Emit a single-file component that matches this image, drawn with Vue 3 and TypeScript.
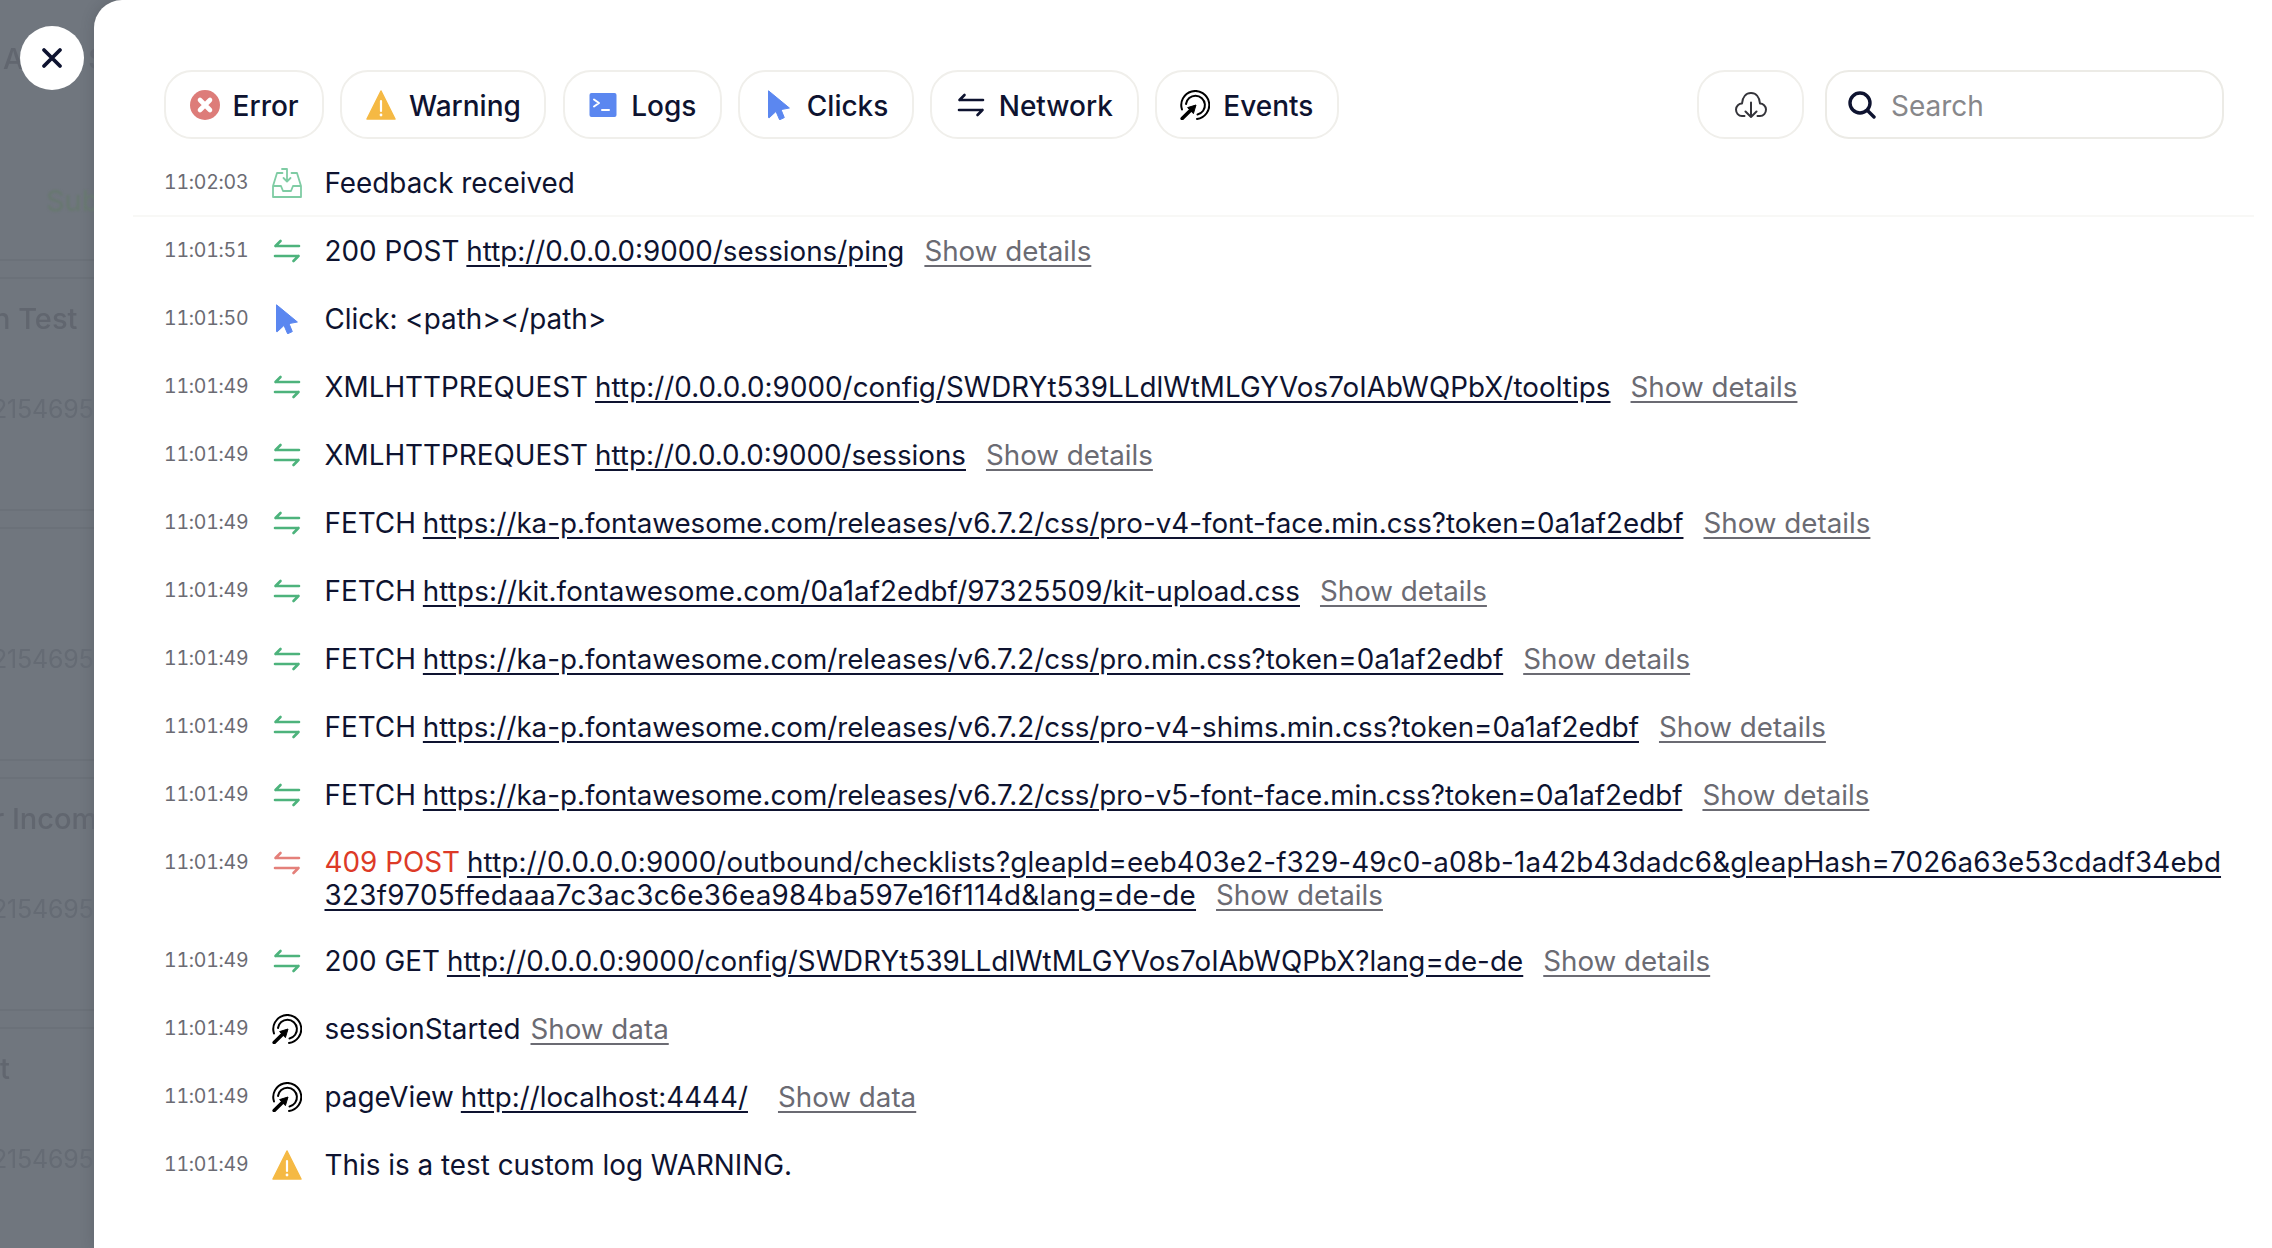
<script setup lang="ts">
type Kind = 'inbox' | 'ok' | 'bad' | 'click' | 'event' | 'warn'
interface Row {
  time: string
  icon: Kind
  lead: string
  leadBad?: boolean
  url?: string
  urlRest?: string
  track?: number
  trackRest?: number
  more?: string
  wide?: boolean
}

const filters: { label: string; icon: Kind | 'error' | 'logs' | 'net' }[] = [
  { label: 'Error', icon: 'error' },
  { label: 'Warning', icon: 'warn' },
  { label: 'Logs', icon: 'logs' },
  { label: 'Clicks', icon: 'click' },
  { label: 'Network', icon: 'net' },
  { label: 'Events', icon: 'event' },
]

const fa = 'https://ka-p.fontawesome.com/releases/v6.7.2/css/'
const rows: Row[] = [
  { time: '11:02:03', icon: 'inbox', lead: 'Feedback received' },
  { time: '11:01:51', icon: 'ok', lead: '200 POST', url: 'http://0.0.0.0:9000/sessions/ping', more: 'Show details' },
  { time: '11:01:50', icon: 'click', lead: 'Click: <path></path>' },
  { time: '11:01:49', icon: 'ok', lead: 'XMLHTTPREQUEST', url: 'http://0.0.0.0:9000/config/SWDRYt539LLdlWtMLGYVos7oIAbWQPbX/tooltips', track: 0.06, more: 'Show details' },
  { time: '11:01:49', icon: 'ok', lead: 'XMLHTTPREQUEST', url: 'http://0.0.0.0:9000/sessions', more: 'Show details' },
  { time: '11:01:49', icon: 'ok', lead: 'FETCH', url: fa + 'pro-v4-font-face.min.css?token=0a1af2edbf', more: 'Show details' },
  { time: '11:01:49', icon: 'ok', lead: 'FETCH', url: 'https://kit.fontawesome.com/0a1af2edbf/97325509/kit-upload.css', track: 0.1, more: 'Show details' },
  { time: '11:01:49', icon: 'ok', lead: 'FETCH', url: fa + 'pro.min.css?token=0a1af2edbf', more: 'Show details' },
  { time: '11:01:49', icon: 'ok', lead: 'FETCH', url: fa + 'pro-v4-shims.min.css?token=0a1af2edbf', more: 'Show details' },
  { time: '11:01:49', icon: 'ok', lead: 'FETCH', url: fa + 'pro-v5-font-face.min.css?token=0a1af2edbf', more: 'Show details' },
  { time: '11:01:49', icon: 'bad', lead: '409 POST', leadBad: true, url: 'http://0.0.0.0:9000/outbound/checklists?gleapId=eeb403e2-f329-49c0-a08b-1a42b43dadc6&gleapHash=7026a63e53cdadf34ebd', track: 0.15, urlRest: '323f9705ffedaaa7c3ac3c6e36ea984ba597e16f114d&lang=de-de', trackRest: 0.33, more: 'Show details' },
  { time: '11:01:49', icon: 'ok', lead: '200 GET', url: 'http://0.0.0.0:9000/config/SWDRYt539LLdlWtMLGYVos7oIAbWQPbX?lang=de-de', track: 0.06, more: 'Show details' },
  { time: '11:01:49', icon: 'event', lead: 'sessionStarted', more: 'Show data' },
  { time: '11:01:49', icon: 'event', lead: 'pageView', url: 'http://localhost:4444/', more: 'Show data', wide: true },
  { time: '11:01:49', icon: 'warn', lead: 'This is a test custom log WARNING.' },
]

const behind = [
  { title: 'n Test', id: '2154695' },
  { title: '', id: '2154695' },
  { title: 'r Incomp', id: '2154695' },
  { title: 't', id: '2154695', tail: true },
]
</script>

<template>
  <div class="page">
    <svg width="0" height="0" class="defs" aria-hidden="true">
      <defs>
        <symbol id="i-error" viewBox="0 0 30 30">
          <circle cx="15" cy="15" r="15" fill="#dd7c79" />
          <path d="M10 10 20 20M20 10 10 20" stroke="#fff" stroke-width="4.6" stroke-linecap="round" />
        </symbol>
        <symbol id="i-warn" viewBox="0 0 30 30">
          <path d="M15 1 29 29H1Z" fill="#f5b944" stroke="#f5b944" stroke-width="1.5" stroke-linejoin="round" />
          <path d="M15 11V21" stroke="#fff" stroke-width="2.2" stroke-linecap="round" />
          <circle cx="15" cy="25" r="1.4" fill="#fff" />
        </symbol>
        <symbol id="i-logs" viewBox="0 0 30 30">
          <rect x="1.5" y="3" width="27" height="24" rx="2" fill="#5b87f0" />
          <path d="M6 9.5 11 13 6 16.5M14 20H21" fill="none" stroke="#fff" stroke-width="2" stroke-linecap="round" stroke-linejoin="round" />
        </symbol>
        <symbol id="i-click" viewBox="0 0 30 30">
          <path d="M4.5 .8 25.4 18 17 19.6 20.3 27.6 15.6 29.8 12 21.4 5.2 27.8 4.5 27.6Z" fill="#5b87f0" stroke="#5b87f0" stroke-width="1" stroke-linejoin="round" />
        </symbol>
        <symbol id="i-arrows" viewBox="0 0 30 30">
          <path d="M3.5 10H27M3.5 10 8.5 5M26.5 20H3M26.5 20 21.5 25" fill="none" stroke="currentColor" stroke-width="2.6" stroke-linecap="round" stroke-linejoin="round" />
        </symbol>
        <symbol id="i-event" viewBox="0 0 30 30">
          <path d="M2 19.5A14 14 0 1 1 17 28.9" fill="none" stroke="#000" stroke-width="2" stroke-linecap="round" />
          <path d="M6 14A9.5 9.5 0 1 1 17.5 24.5" fill="none" stroke="#000" stroke-width="2" stroke-linecap="round" />
          <path d="M16 15 7.6 17.6 13.4 23.6Z" fill="#000" stroke="#000" stroke-width="1" stroke-linejoin="round" />
          <path d="M2.2 28.6 10.6 20.2" stroke="#000" stroke-width="3.6" stroke-linecap="round" />
        </symbol>
        <symbol id="i-inbox" viewBox="0 0 30 30">
          <path d="M10.5 5H5L1 18V29H29V18L25 5H19.5M1 18H9L11 23H19L21 18H29M10 1H15V13M11.5 10 15 13.5 18.5 10" fill="none" stroke="#7fcca4" stroke-width="1.8" stroke-linejoin="round" stroke-linecap="round" />
        </symbol>
      </defs>
    </svg>

    <div class="behind" aria-hidden="true">
      <div class="behind-top">
        <div class="behind-head"><span>A</span><span>S</span></div>
        <div class="behind-sub">Subs</div>
      </div>
      <div v-for="(b, i) in behind" :key="i" class="behind-row">
        <div class="behind-title" :class="{ tail: b.tail }">{{ b.title }}</div>
        <div class="behind-id">{{ b.id }}</div>
      </div>
    </div>

    <button class="close" type="button" aria-label="Close">
      <svg width="24" height="24" viewBox="0 0 24 24">
        <path d="M4 4 20 20M20 4 4 20" stroke="#0e1330" stroke-width="3.8" stroke-linecap="round" />
      </svg>
    </button>

    <main class="panel">
      <header class="toolbar">
        <div class="pills">
          <button v-for="f in filters" :key="f.label" class="pill" type="button">
            <svg class="pill-icon">
              <use :href="f.icon === 'net' ? '#i-arrows' : '#i-' + f.icon" />
            </svg>
            <span>{{ f.label }}</span>
          </button>
        </div>
        <div class="tools">
          <button class="cloud" type="button" aria-label="Download">
            <svg width="32" height="26" viewBox="0 0 32 26">
              <path d="M9.5 24H7C3.5 24 1 21 1 17.5 1 14 4 11.5 7 11.5 7.5 5 11 1 16 1 21 1 24.5 5 25 11.5 28 11.5 31 14 31 17.5 31 21 28.5 24 25 24H22.5M16 10.5V25M10.5 19.5 16 25 21.5 19.5" fill="none" stroke="#34343a" stroke-width="2" stroke-linecap="round" stroke-linejoin="round" />
            </svg>
          </button>
          <div class="search">
            <svg width="28" height="28" viewBox="0 0 28 28">
              <circle cx="12" cy="12" r="10" fill="none" stroke="#0e1330" stroke-width="3.4" />
              <path d="M19.5 19.5 26 26" stroke="#0e1330" stroke-width="3.4" stroke-linecap="round" />
            </svg>
            <span class="placeholder">Search</span>
          </div>
        </div>
      </header>

      <section class="log">
        <div v-for="(r, i) in rows" :key="i" class="row" :class="{ first: i === 0, double: r.urlRest }">
          <time class="time">{{ r.time }}</time>
          <div class="icon" :class="r.icon">
            <svg width="30" height="30">
              <use :href="r.icon === 'ok' || r.icon === 'bad' ? '#i-arrows' : '#i-' + r.icon" />
            </svg>
          </div>
          <div class="content">
            <p class="line">
              <span class="lead" :class="{ bad: r.leadBad }">{{ r.lead }}</span>
              <a v-if="r.url" class="url" href="#" :style="{ letterSpacing: (r.track ?? 0) + 'px' }">{{ r.url }}</a>
              <template v-if="r.urlRest">
                <br />
                <a class="url rest" href="#" :style="{ letterSpacing: (r.trackRest ?? 0) + 'px' }">{{ r.urlRest }}</a>
              </template>
              <a v-if="r.more" class="more" :class="{ near: !r.url, wide: r.wide }" href="#">{{ r.more }}</a>
            </p>
          </div>
        </div>
      </section>
    </main>
  </div>
</template>

<style>
html,
body {
  margin: 0;
  background: #70767e;
}
</style>

<style scoped>
.page {
  display: flex;
  width: 2272px;
  height: 1248px;
  overflow: hidden;
  background: #70767e;
  font-family: Inter, "Liberation Sans", sans-serif;
  color: #0e1330;
  position: relative;
}
.defs {
  position: absolute;
}
button {
  font: inherit;
  color: inherit;
  background: #fff;
  padding: 0;
  margin: 0;
  cursor: pointer;
}

.behind {
  flex: 0 0 94px;
  width: 94px;
  overflow: hidden;
  color: #61666f;
  font-size: 29px;
  font-weight: 500;
  white-space: nowrap;
}
.behind-top {
  height: 259px;
  box-sizing: border-box;
  padding-top: 42px;
}
.behind-head {
  display: flex;
  justify-content: space-between;
  width: 104px;
  padding-left: 3px;
  line-height: 34px;
  filter: blur(0.6px);
}
.behind-sub {
  margin: 108px 0 0 46px;
  line-height: 34px;
  color: #67786f;
  font-weight: 400;
  filter: blur(0.8px);
}
.behind-row {
  height: 250px;
  box-sizing: border-box;
  border-top: 2px solid #6b7179;
  padding-top: 16px;
}
.behind-row::before {
  content: "";
  display: block;
  height: 2px;
  background: #6b7179;
}
.behind-title {
  height: 34px;
  margin-top: 23px;
  margin-left: -7px;
  line-height: 34px;
  filter: blur(0.6px);
}
.behind-title.tail {
  margin-left: 0;
}
.behind-id {
  margin-top: 56px;
  margin-left: -8px;
  line-height: 34px;
  font-size: 25px;
  font-weight: 400;
  letter-spacing: -0.2px;
  color: #656b74;
  filter: blur(0.6px);
}

.close {
  position: absolute;
  left: 20px;
  top: 26px;
  width: 64px;
  height: 64px;
  border: 0;
  border-radius: 50%;
  display: flex;
  align-items: center;
  justify-content: center;
  z-index: 2;
}

.panel {
  flex: 1;
  min-width: 0;
  background: #fff;
  border-radius: 28px 0 0 0;
  box-shadow: 0 0 14px rgba(40, 44, 52, 0.22);
}
.toolbar {
  display: flex;
  justify-content: space-between;
  padding: 70px 48px 10px 70px;
}
.pills {
  display: flex;
  gap: 16.2px;
}
.pill {
  height: 69px;
  box-sizing: border-box;
  display: flex;
  align-items: center;
  gap: 13px;
  padding: 0 23.6px;
  border: 2px solid #f0efeb;
  border-radius: 28px;
  font-size: 28px;
  font-weight: 500;
  color: #0e1330;
}
.pill span {
  padding-top: 2px;
}
.pill-icon {
  width: 30px;
  height: 30px;
}
.tools {
  display: flex;
  gap: 21px;
}
.cloud {
  width: 107px;
  height: 69px;
  box-sizing: border-box;
  border: 2px solid #f0efeb;
  border-radius: 28px;
  display: flex;
  align-items: center;
  justify-content: center;
}
.search {
  width: 399px;
  height: 69px;
  box-sizing: border-box;
  border: 2px solid #ecebe6;
  border-radius: 24px;
  display: flex;
  align-items: center;
  gap: 15px;
  padding-left: 21px;
}
.placeholder {
  padding-top: 2px;
  font-size: 28px;
  color: #87878a;
}

.log {
  margin: 0 18px 0 39px;
}
.row {
  display: flex;
  box-sizing: border-box;
  padding: 16px 30px 14px 31px;
  border-bottom: 2px solid transparent;
}
.row.first {
  border-bottom-color: #f8f8f6;
}
.row.double .content {
  padding-top: 1px;
  margin-bottom: -1px;
}
.time {
  flex: 0 0 108px;
  height: 35px;
  line-height: 35px;
  font-size: 19.5px;
  font-variant-numeric: tabular-nums;
  letter-spacing: -0.25px;
  color: #6b6b73;
}
.icon {
  flex: 0 0 52.5px;
  height: 36px;
  display: flex;
  align-items: center;
}
.icon.ok {
  color: #4db37c;
}
.icon.bad {
  color: #e4807a;
}
.content {
  flex: 1;
  min-width: 0;
  min-height: 36px;
  display: flex;
  align-items: center;
}
.line {
  margin: 0;
  font-size: 27.75px;
  line-height: 33px;
  word-break: break-all;
}
.lead {
  font-size: 27.85px;
  word-break: normal;
}
.bad {
  color: #dd3a27;
}
.url {
  margin-left: 7px;
  color: #0e1330;
  text-decoration: underline;
  text-underline-offset: 4px;
}
.url.rest {
  margin-left: 0;
}
.more {
  margin-left: 20px;
  color: #6b6b73;
  text-decoration: underline;
  text-underline-offset: 4px;
  word-break: normal;
  white-space: nowrap;
}
.more.near {
  margin-left: 10px;
}
.more.wide {
  margin-left: 30px;
}
</style>
